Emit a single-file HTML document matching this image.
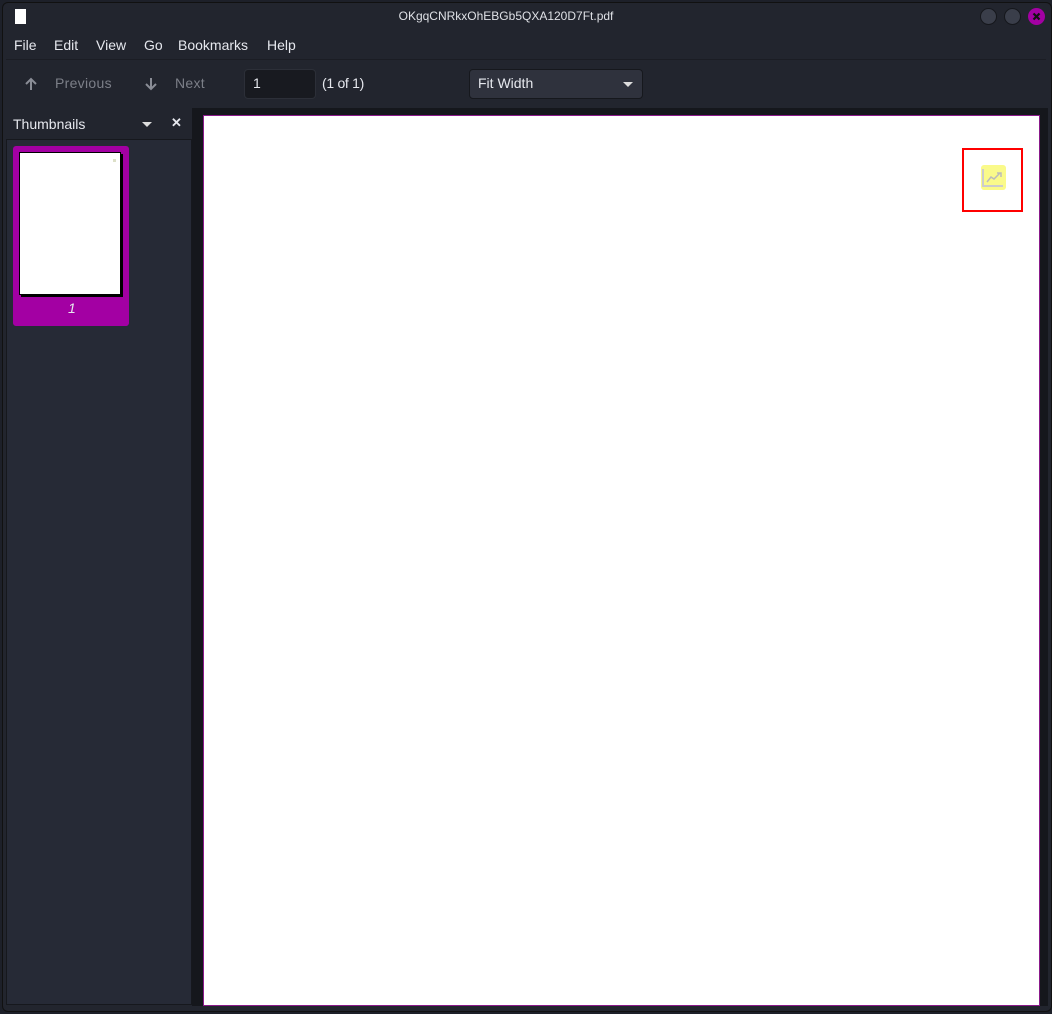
<!DOCTYPE html>
<html><head><style>
body{margin:0;width:1052px;height:1014px;background:#1d2029;font-family:"Liberation Sans",sans-serif;position:relative;overflow:hidden;color:#e6e8ee}
div{position:absolute;box-sizing:border-box}
.t{font-size:14px;white-space:nowrap}
</style></head><body>
<div style="left:2px;top:2px;width:1050px;height:1010px;background:#22252e;border-radius:6px;border:1px solid #111"></div>
<div style="left:15px;top:9px;width:11px;height:15px;background:#fff"></div>
<div class="t" style="left:0;width:1012px;top:9px;text-align:center;font-size:12px;color:#dfe1e6">OKgqCNRkxOhEBGb5QXA120D7Ft.pdf</div>
<div style="left:980px;top:8px;width:17px;height:17px;border-radius:50%;background:#3a3e4a;border:1px solid #15171c"></div>
<div style="left:1004px;top:8px;width:17px;height:17px;border-radius:50%;background:#3a3e4a;border:1px solid #15171c"></div>
<div style="left:1028px;top:8px;width:17px;height:17px;border-radius:50%;background:#a300a3"></div>
<svg style="position:absolute;left:1028px;top:8px" width="17" height="17"><path d="M5.5 5.5L11.5 11.5M11.5 5.5L5.5 11.5" stroke="#111" stroke-width="2.2"/></svg>
<div class="t" style="left:14px;top:37px">File</div>
<div class="t" style="left:54px;top:37px">Edit</div>
<div class="t" style="left:96px;top:37px">View</div>
<div class="t" style="left:144px;top:37px">Go</div>
<div class="t" style="left:178px;top:37px">Bookmarks</div>
<div class="t" style="left:267px;top:37px">Help</div>
<div style="left:6px;top:59px;width:1040px;height:1px;background:#1b1d24"></div>
<svg style="position:absolute;left:24px;top:77px" width="14" height="14"><path d="M7 13V2M2 7L7 2L12 7" stroke="#8a8d96" stroke-width="2" fill="none"/></svg>
<div class="t" style="left:55px;top:75px;color:#7c7f88;letter-spacing:0.3px">Previous</div>
<svg style="position:absolute;left:144px;top:77px" width="14" height="14"><path d="M7 1V12M2 7L7 12L12 7" stroke="#8a8d96" stroke-width="2" fill="none"/></svg>
<div class="t" style="left:175px;top:75px;color:#7c7f88;letter-spacing:0.3px">Next</div>
<div style="left:244px;top:69px;width:72px;height:30px;background:#181a20;border:1px solid #2c2f38;border-radius:4px"></div>
<div class="t" style="left:253px;top:75px">1</div>
<div class="t" style="left:322px;top:75px;letter-spacing:-0.3px">(1 of 1)</div>
<div style="left:469px;top:69px;width:174px;height:30px;background:#2f323d;border:1px solid #16181d;border-radius:4px"></div>
<div class="t" style="left:478px;top:75px">Fit Width</div>
<div style="left:623px;top:82px;width:0;height:0;border-left:5px solid transparent;border-right:5px solid transparent;border-top:5px solid #ddd"></div>
<div style="left:6px;top:108px;width:186px;height:897px;background:#262a36;border:1px solid #16181d"></div>
<div style="left:6px;top:108px;width:186px;height:32px;background:#22252e;border-bottom:1px solid #16181d"></div>
<div class="t" style="left:13px;top:116px">Thumbnails</div>
<div style="left:142px;top:122px;width:0;height:0;border-left:5px solid transparent;border-right:5px solid transparent;border-top:5px solid #ddd"></div>
<div class="t" style="left:171px;top:115px;font-weight:bold;font-size:13px">✕</div>
<div style="left:13px;top:146px;width:116px;height:180px;background:#a300a3;border-radius:3px"></div>
<div style="left:21px;top:154px;width:102px;height:143px;background:#000"></div>
<div style="left:19px;top:152px;width:102px;height:143px;background:#fff;border:1px solid #000"></div>
<div style="left:113px;top:159px;width:3px;height:3px;background:#dde0c8"></div>
<div class="t" style="left:68px;top:300px;font-style:italic">1</div>
<div style="left:192px;top:108px;width:856px;height:898px;background:#15171c"></div>
<div style="left:203px;top:115px;width:837px;height:891px;background:#fff;border:1px solid #8a1a8a"></div>
<div style="left:962px;top:148px;width:61px;height:64px;border:2px solid #f00"></div>
<div style="left:981px;top:165px;width:25px;height:25px;background:#fafa8a;border-radius:3px"></div>
<svg style="position:absolute;left:981px;top:165px" width="25" height="25"><path d="M2 4V21H22" stroke="#ccc" stroke-width="2" fill="none"/><path d="M6 17L10 12L13 14L19 8M16 8H20V12" stroke="#bbb" stroke-width="1.5" fill="none"/></svg>
</body></html>
